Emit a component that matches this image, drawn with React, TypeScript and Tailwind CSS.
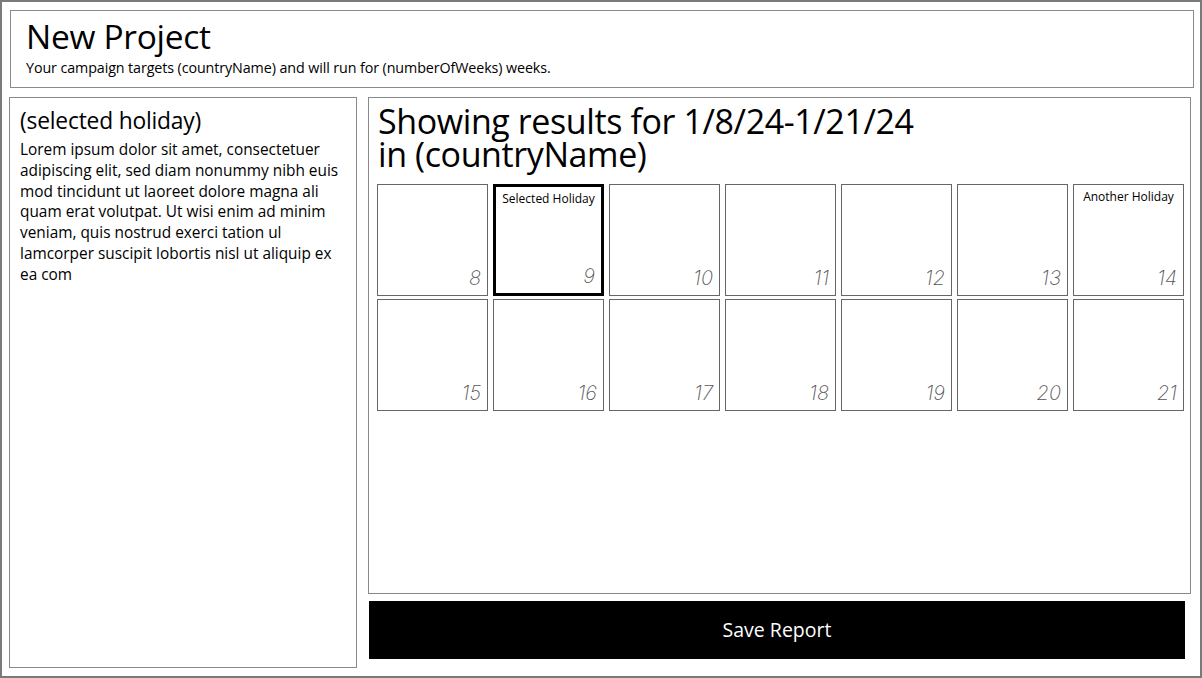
import React from "react";

const week1 = [
  { day: 8 },
  { day: 9, label: "Selected Holiday", selected: true },
  { day: 10 },
  { day: 11 },
  { day: 12 },
  { day: 13 },
  { day: 14, label: "Another Holiday" },
];

const week2 = [15, 16, 17, 18, 19, 20, 21].map((day) => ({ day }));

const loremLines = [
  "Lorem ipsum dolor sit amet, consectetuer",
  "adipiscing elit, sed diam nonummy nibh euis",
  "mod tincidunt ut laoreet dolore magna ali",
  "quam erat volutpat. Ut wisi enim ad minim",
  "veniam, quis nostrud exerci tation ul",
  "lamcorper suscipit lobortis nisl ut aliquip ex",
  "ea com",
];

type Cell = { day: number; label?: string; selected?: boolean };

function DayCell({ cell }: { cell: Cell }) {
  return (
    <div
      className={
        cell.selected
          ? "relative flex h-[112px] flex-col items-center border-[3px] border-black"
          : "relative flex h-[112px] flex-col items-center border border-[#666]"
      }
    >
      {cell.label && (
        <span
          className={
            cell.selected
              ? "mt-[4px] text-[12px] leading-[16px] text-black"
              : "mt-[4px] text-[12px] leading-[16px] font-medium text-black"
          }
        >
          {cell.label}
        </span>
      )}
      <span
        className="absolute right-[6px] bottom-[7px] text-[20px] leading-[20px] font-extralight italic text-[#555]"
        style={{ fontFamily: "Inter, sans-serif" }}
      >
        {cell.day}
      </span>
    </div>
  );
}

export default function App() {
  return (
    <div
      className="flex h-[678px] w-[1202px] flex-col border-2 border-[#7a7a7a] bg-white px-[7px] pt-[8px] text-black"
      style={{ fontFamily: '"Open Sans", sans-serif' }}
    >
      <header className="ml-[1px] h-[78px] w-[1184px] border-[1.5px] border-[#8a8a8a] px-[15px] pt-[4px]">
        <h1 className="text-[33.5px] leading-[42px] tracking-[-0.3px]">New Project</h1>
        <p className="mt-[1px] text-[14.3px] leading-[20px] tracking-[-0.1px]">
          Your campaign targets (countryName) and will run for (numberOfWeeks) weeks.
        </p>
      </header>

      <div className="mt-[9px] flex gap-[11px]">
        <aside className="h-[571px] w-[348px] border-[1.5px] border-[#8a8a8a] px-[10px] pt-[7px]">
          <h2 className="text-[22.8px] leading-[32px] tracking-[-0.2px]">(selected holiday)</h2>
          <p className="mt-[3px] text-[15.4px] leading-[20.8px] whitespace-nowrap">
            {loremLines.map((line) => (
              <span key={line} className="block">
                {line}
              </span>
            ))}
          </p>
        </aside>

        <div className="flex w-[823px] flex-col">
          <section className="h-[497px] border-[1.5px] border-[#8a8a8a] px-[8px] pt-[7px]">
            <h2 className="ml-[1px] text-[34px] leading-[33px] tracking-[-0.4px]">
              Showing results for 1/8/24-1/21/24
              <br />
              in (countryName)
            </h2>
            <div className="mt-[13px] grid w-[807px] grid-cols-[repeat(7,111px)] gap-x-[5px] gap-y-[3px]">
              {[...week1, ...week2].map((c) => (
                <DayCell key={c.day} cell={c} />
              ))}
            </div>
          </section>
          <button className="mt-[7px] ml-[1px] h-[58px] w-[816px] bg-black text-[19.5px] text-white">
            Save Report
          </button>
        </div>
      </div>
    </div>
  );
}
